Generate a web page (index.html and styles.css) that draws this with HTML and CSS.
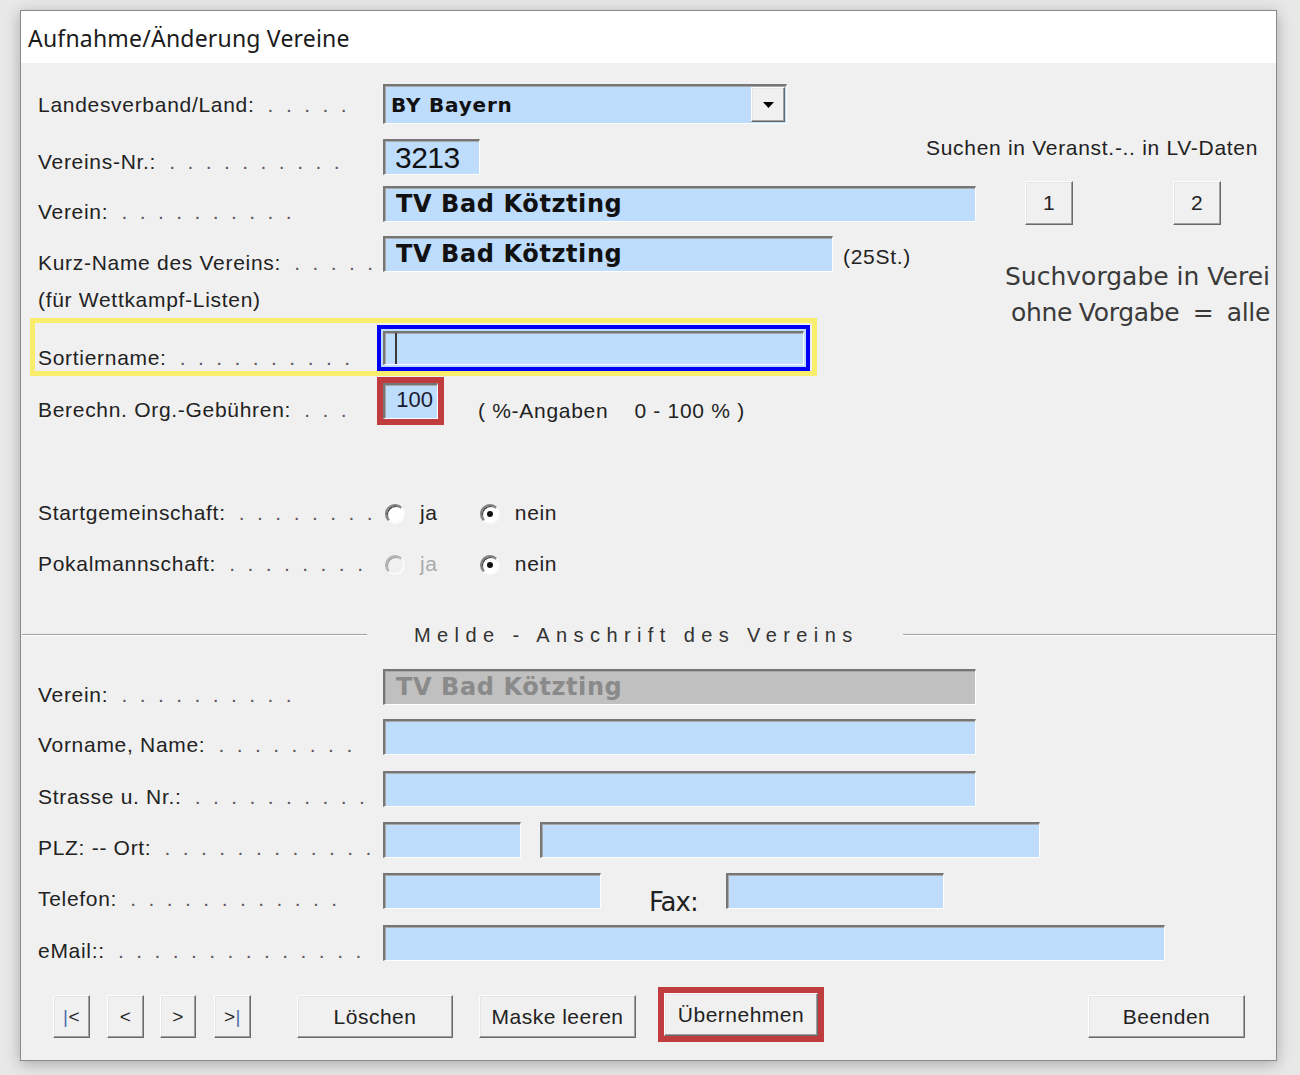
FILE: index.html
```html
<!DOCTYPE html>
<html lang="de">
<head>
<meta charset="utf-8">
<title>Aufnahme/Änderung Vereine</title>
<link rel="stylesheet" href="styles.css">
</head>
<body>
<div class="window">
  <div class="titlebar">Aufnahme/Änderung Vereine</div>
  <div class="client">

    <div class="row r-land">
      <span class="lbl">Landesverband/Land:<span class="dots"> . . . . .</span></span>
      <div class="combo sunken">
        <span class="combo-val">BY Bayern</span>
        <span class="combo-btn raised"><svg width="11" height="6" viewBox="0 0 11 6"><path d="M0 0H11L5.5 6Z" fill="#000"/></svg></span>
      </div>
    </div>

    <div class="row r-nr">
      <span class="lbl">Vereins-Nr.:<span class="dots"> . . . . . . . . . .</span></span>
      <div class="field sunken f-nr"><span class="val-num">3213</span></div>
      <span class="search-head">Suchen in Veranst.-.. in LV-Daten</span>
    </div>

    <div class="row r-verein">
      <span class="lbl">Verein:<span class="dots"> . . . . . . . . . .</span></span>
      <div class="field sunken f-wide"><span class="val-name">TV Bad Kötzting</span></div>
      <button class="btn raised btn-s1">1</button>
      <button class="btn raised btn-s2">2</button>
    </div>

    <div class="split">
      <div class="split-main">
        <div class="row r-kurz">
          <span class="lbl">Kurz-Name des Vereins:<span class="dots"> . . . . .</span></span>
          <div class="field sunken f-kurz"><span class="val-name">TV Bad Kötzting</span></div>
          <span class="len-note">(25St.)</span>
        </div>
        <div class="sub-note">(für Wettkampf-Listen)</div>
      </div>
      <div class="hint"><div>Suchvorgabe in Verei</div><div class="hint-2">ohne Vorgabe  =  alle</div></div>
    </div>

    <div class="row focus-frame">
      <span class="lbl">Sortiername:<span class="dots"> . . . . . . . . . .</span></span>
      <div class="focus-ring">
        <div class="field sunken f-sort"><span class="caret"></span></div>
      </div>
    </div>

    <div class="row r-fee">
      <span class="lbl">Berechn. Org.-Gebühren:<span class="dots"> . . .</span></span>
      <div class="mark">
        <div class="field sunken f-fee"><span class="val-fee">100</span></div>
      </div>
      <span class="fee-note">( %-Angaben    0 - 100 % )</span>
    </div>

    <div class="row r-radio r-start">
      <span class="lbl">Startgemeinschaft:<span class="dots"> . . . . . . . .</span></span>
      <span class="radio"></span><span class="opt">ja</span>
      <span class="radio on opt-2"></span><span class="opt">nein</span>
    </div>

    <div class="row r-radio r-pokal">
      <span class="lbl">Pokalmannschaft:<span class="dots"> . . . . . . . .</span></span>
      <span class="radio disabled"></span><span class="opt opt-off">ja</span>
      <span class="radio on opt-2"></span><span class="opt">nein</span>
    </div>

    <div class="group-head">
      <span class="rule rule-l"></span>
      <span class="group-title">Melde - Anschrift des Vereins</span>
      <span class="rule rule-r"></span>
    </div>

    <div class="row r-addr r-first">
      <span class="lbl">Verein:<span class="dots"> . . . . . . . . . .</span></span>
      <div class="field sunken f-wide f-readonly"><span class="val-name">TV Bad Kötzting</span></div>
    </div>

    <div class="row r-addr r-gap14">
      <span class="lbl">Vorname, Name:<span class="dots"> . . . . . . . .</span></span>
      <div class="field sunken f-wide"></div>
    </div>

    <div class="row r-addr r-gap16">
      <span class="lbl">Strasse u. Nr.:<span class="dots"> . . . . . . . . . .</span></span>
      <div class="field sunken f-wide"></div>
    </div>

    <div class="row r-addr r-gap15">
      <span class="lbl">PLZ: -- Ort:<span class="dots"> . . . . . . . . . . . .</span></span>
      <div class="field sunken f-plz"></div>
      <div class="field sunken f-ort"></div>
    </div>

    <div class="row r-addr r-gap15">
      <span class="lbl">Telefon:<span class="dots"> . . . . . . . . . . . .</span></span>
      <div class="field sunken f-tel"></div>
      <span class="fax-lbl">Fax:</span>
      <div class="field sunken f-fax"></div>
    </div>

    <div class="row r-addr r-gap16">
      <span class="lbl">eMail::<span class="dots"> . . . . . . . . . . . . . .</span></span>
      <div class="field sunken f-mail"></div>
    </div>

    <div class="row button-bar">
      <button class="btn raised nav nav-1"><span class="bar">|</span>&lt;</button>
      <button class="btn raised nav nav-2">&lt;</button>
      <button class="btn raised nav nav-3">&gt;</button>
      <button class="btn raised nav nav-4">&gt;<span class="bar">|</span></button>
      <button class="btn raised act act-del">Löschen</button>
      <button class="btn raised act act-clear">Maske leeren</button>
      <div class="mark mark-btn"><button class="btn raised act act-save">Übernehmen</button></div>
      <button class="btn raised act act-quit">Beenden</button>
    </div>

  </div>
</div>
</body>
</html>
```

FILE: styles.css
```css
* { box-sizing: border-box; }

html, body { margin: 0; }

body {
  height: 1075px;
  overflow: hidden;
  padding: 10px 0 0 20px;
  background: #e8e8e8;
  font-family: "Liberation Sans", Arial, sans-serif;
}

/* dialog window */
.window {
  width: 1257px;
  height: 1051px;
  border: 1px solid #8a8a8a;
  background: #f0f0f0;
  box-shadow: 0 3px 14px rgba(0, 0, 0, 0.28);
  overflow: hidden;
  display: flex;
  flex-direction: column;
}

.titlebar {
  flex: 0 0 52px;
  background: #fff;
  padding: 3px 0 0 7px;
  font-family: "Noto Sans", "Open Sans", sans-serif;
  font-size: 23px;
  letter-spacing: 0.2px;
  line-height: 48px;
  color: #1b1b1b;
}

.client {
  flex: 1;
  padding: 21px 0 0 17px;
  font-size: 21px;
  letter-spacing: 0.7px;
  color: #222;
  overflow: hidden;
}

/* form rows */
.row {
  display: flex;
  align-items: flex-start;
  white-space: nowrap;
}

.lbl {
  flex: 0 0 345px;
  line-height: 24px;
  margin-top: 14px;
  white-space: pre;
}

.dots {
  margin-left: 4px;
  letter-spacing: 3.3px;
  color: #5e5560;
}

/* 3D edges */
.sunken {
  background: #bedcfc;
  border-style: solid;
  border-width: 2px 1px 1px 2px;
  border-color: #767676 #fdfdfd #fdfdfd #767676;
  box-shadow: inset 1px 1px 0 #a8a8a8;
}

.raised {
  background: #f0f0f0;
  border: 1px solid;
  border-color: #fdfdfd #696969 #696969 #fdfdfd;
  box-shadow: inset -1px -1px 0 #a0a0a0, inset 1px 1px 0 #e6e6e6;
}

.field { height: 36px; flex: 0 0 auto; }

.val-name {
  display: block;
  padding: 1px 0 0 11px;
  font-family: "DejaVu Sans", sans-serif;
  font-weight: bold;
  font-size: 24px;
  letter-spacing: 0.6px;
  line-height: 30px;
  color: #111;
}

/* Landesverband */
.r-land { height: 40px; }
.r-land .lbl { margin-top: 9px; }

.combo {
  width: 404px;
  height: 40px;
  display: flex;
}

.combo-val {
  flex: 1;
  padding: 4px 0 0 6px;
  font-family: "DejaVu Sans", sans-serif;
  font-weight: bold;
  font-size: 20px;
  letter-spacing: 0.8px;
  line-height: 30px;
  color: #111;
}

.combo-btn {
  width: 34px;
  margin: 1px 1px 1px 0;
  display: flex;
  align-items: center;
  justify-content: center;
}

/* Vereins-Nr. */
.r-nr { margin-top: 15px; height: 36px; }
.r-nr .lbl { margin-top: 11px; }

.f-nr { width: 97px; }

.val-num {
  display: block;
  padding: 1px 0 0 10px;
  font-size: 30px;
  letter-spacing: -0.5px;
  line-height: 32px;
  color: #111;
}

.search-head {
  margin: -3px 0 0 446px;
  line-height: 24px;
}

/* Verein */
.r-verein { margin-top: 6px; height: 44px; }
.r-verein .lbl { margin-top: 19px; }
.r-verein .field { margin-top: 5px; }

.f-wide { width: 593px; }

.btn {
  height: 44px;
  padding: 0;
  font-family: "Liberation Sans", Arial, sans-serif;
  font-size: 21px;
  letter-spacing: 0.5px;
  color: #222;
  display: flex;
  align-items: center;
  justify-content: center;
}

.btn-s1 { width: 48px; margin-left: 49px; }
.btn-s2 { width: 48px; margin-left: 100px; }

/* Kurz-Name + search hint */
.split {
  margin-top: 11px;
  height: 82px;
  display: flex;
}

.split-main { flex: 0 0 967px; }

.r-kurz { height: 36px; }
.r-kurz .lbl { margin-top: 15px; }

.f-kurz { width: 450px; }

.len-note {
  margin: 9px 0 0 10px;
  line-height: 24px;
}

.sub-note {
  margin-top: 16px;
  line-height: 24px;
}

.hint {
  flex: 0 0 auto;
  padding-top: 23px;
  font-family: "DejaVu Sans", sans-serif;
  font-size: 25px;
  letter-spacing: 0;
  line-height: 36px;
  color: #3a3a3a;
  white-space: pre;
}

.hint-2 {
  padding-left: 6px;
  letter-spacing: -0.3px;
  word-spacing: -1px;
}

/* focused Sortiername field */
.focus-frame {
  width: 787px;
  height: 58px;
  margin-left: -8px;
  padding: 2px 2px 0 3px;
  border: 5px solid #f8ee6c;
}

.focus-frame .lbl { margin-top: 21px; }

.focus-ring {
  width: 433px;
  height: 46px;
  margin-left: -6px;
  padding: 2px;
  border: 4px solid #0000f4;
  background: #bedcfc;
}

.f-sort {
  width: 100%;
  height: 34px;
  padding-left: 10px;
}

.caret {
  display: block;
  width: 2px;
  height: 31px;
  background: #3a3a3a;
}

/* Org.-Gebühren */
.r-fee { margin-top: 1px; height: 48px; }
.r-fee .lbl { margin-top: 21px; }

.mark {
  margin-left: -6px;
  border: 6px solid #c13c3e;
}

.f-fee {
  width: 55px;
  padding-right: 4px;
  text-align: right;
}

.val-fee {
  font-size: 22px;
  letter-spacing: 0;
  line-height: 30px;
  color: #1a1a2e;
}

.fee-note {
  margin: 22px 0 0 34px;
  line-height: 24px;
  white-space: pre;
}

/* radio rows */
.r-radio { height: 24px; }
.r-radio .lbl { margin-top: 0; }
.r-start { margin-top: 76px; }
.r-pokal { margin-top: 27px; }

.radio {
  flex: 0 0 20px;
  height: 20px;
  margin: 3px 0 0 2px;
  border-radius: 50%;
  border: 2px solid;
  border-color: #7f7f7f #fbfbfb #fbfbfb #7f7f7f;
  background: #fff;
  box-shadow: inset 1px 1px 0 #3c3c3c;
  display: flex;
  align-items: center;
  justify-content: center;
}

.radio.on::after {
  content: "";
  width: 6px;
  height: 6px;
  border-radius: 50%;
  background: #111;
}

.radio.disabled {
  background: #f0f0f0;
  border-color: #b4b4b4 #fbfbfb #fbfbfb #b4b4b4;
  box-shadow: inset 1px 1px 0 #9a9a9a;
}

.opt {
  margin-left: 15px;
  line-height: 24px;
}

.opt-off { color: #a9a9a9; }

.radio.opt-2 { margin-left: 42px; }

/* group separator */
.group-head {
  height: 24px;
  margin: 47px 0 0 -16px;
  display: flex;
  align-items: center;
}

.rule {
  height: 2px;
  border-top: 1px solid #a0a0a0;
  border-bottom: 1px solid #fff;
}

.rule-l { flex: 0 0 345px; }
.rule-r { flex: 1; }

.group-title {
  margin: 0 44px 0 47px;
  font-size: 20px;
  letter-spacing: 6.4px;
  line-height: 24px;
  color: #333;
  white-space: nowrap;
}

/* address rows */
.r-addr { height: 36px; }
.r-first { margin-top: 22px; }
.r-gap14 { margin-top: 14px; }
.r-gap15 { margin-top: 15px; }
.r-gap16 { margin-top: 16px; }

.f-readonly { background: #c0c0c0; }
.f-readonly .val-name { color: #8a8a8a; }

.f-plz { width: 138px; }
.f-ort { width: 500px; margin-left: 19px; }
.f-tel { width: 218px; }
.f-fax { width: 218px; margin-left: 28px; }
.f-mail { width: 782px; }

.fax-lbl {
  margin: 14px 0 0 48px;
  font-family: "DejaVu Sans", sans-serif;
  font-size: 26px;
  letter-spacing: -1px;
  line-height: 30px;
  color: #222;
}

/* bottom buttons */
.button-bar {
  margin-top: 34px;
  height: 43px;
}

.button-bar .btn { height: 43px; }

.nav { width: 37px; font-size: 19px; }
.nav-1 { margin-left: 15px; }
.nav-2 { margin-left: 17px; }
.nav-3 { margin-left: 16px; width: 36px; }
.nav-4 { margin-left: 18px; }

.bar { color: #4a6ea8; }

.act { width: 156px; }
.act-del { margin-left: 46px; }
.act-clear { margin-left: 26px; width: 157px; }

.mark-btn {
  margin: -8px 0 0 22px;
}

.act-save { width: 154px; height: 42px; }

.act-quit { margin-left: 264px; width: 157px; }
```
